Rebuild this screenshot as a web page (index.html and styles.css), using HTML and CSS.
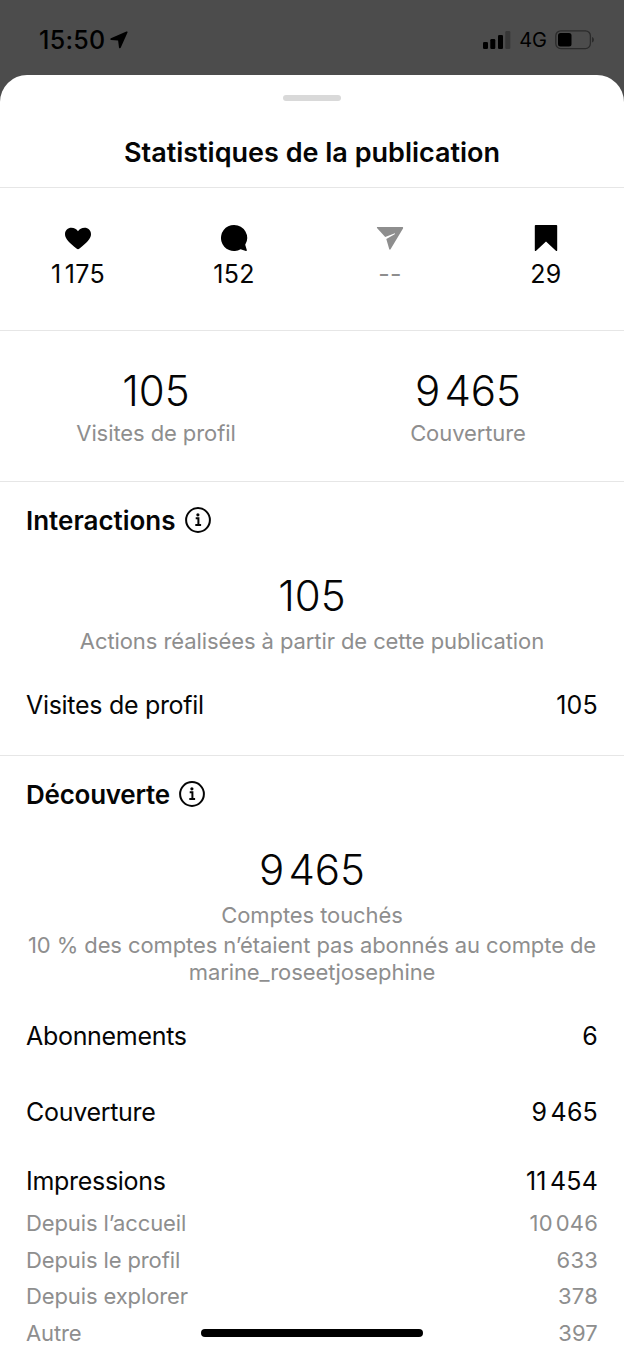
FILE: index.html
```html
<!DOCTYPE html>
<html lang="fr">
<head>
  <meta charset="UTF-8" />
  <meta name="viewport" content="width=device-width, initial-scale=1.0"/>
  <title>Statistiques de la publication</title>
  <link rel="stylesheet" href="styles.css">
</head>
<body>
  <div class="status">
    <div class="status-left">
      <span class="time">15:50</span>
      <svg width="18" height="18" viewBox="0 0 18 18"><path d="M16.400.6.900 7.300c-.9.500-.8 1.600.3 1.700l6.900.5.900 6.900c.2 1.100 1.400 1.200 1.800.2L17.500 1.600c.3-.8-.3-1.300-1.100-1z"/></svg>
    </div>
    <div class="status-right">
      <svg class="signal" width="28" height="18" viewBox="0 0 28 18">
        <rect x="0" y="11" width="5" height="7" rx="1.300"/>
        <rect x="7.300" y="8" width="5" height="10" rx="1.300"/>
        <rect x="15" y="4" width="5" height="14" rx="1.300"/>
        <rect x="22.300" y="0" width="5" height="18" rx="1.300" fill="#373737"/>
      </svg>
      <span class="network">4G</span>
      <svg class="battery" width="40" height="20" viewBox="0 0 40 20">
        <rect x=".8" y=".8" width="34.600" height="17.800" rx="5" fill="none" stroke="#2b2b2b" stroke-width="1.300"/>
        <rect x="3" y="3" width="13.500" height="13.400" rx="2.500"/>
        <path d="M37 7v5.500c2.600-.8 2.600-4.700 0-5.500z" fill="#2b2b2b"/>
      </svg>
    </div>
  </div>

  <main class="sheet">
    <div class="grabber"></div>
    <h1>Statistiques de la publication</h1>

    <section class="counts">
      <div class="count">
        <svg width="28" height="28" viewBox="0 0 28 28"><path d="M14 25.200c-.5 0-1-.3-1.500-.7C5.500 18.700 1 14.800 1 10.200 1 6.300 3.900 3.800 7.400 3.800c2.900 0 5.200 1.300 6.600 3.500 1.400-2.200 3.700-3.500 6.600-3.500 3.500 0 6.400 2.500 6.400 6.400 0 4.600-4.500 8.500-11.500 14.300-.5.400-1 .7-1.500.7z"/></svg>
        <span>1<i class="thin"></i>175</span>
      </div>
      <div class="count">
        <svg width="28" height="28" viewBox="0 0 28 28"><path d="M14 1a13 13 0 1 0 6.600 24.200l5.300 1.700c.7.2 1.100-.2.900-.9l-1.600-5.200A13 13 0 0 0 14 1z"/></svg>
        <span>152</span>
      </div>
      <div class="count off">
        <svg width="28" height="28" viewBox="0 0 28 28"><path d="M1.700 3.100h24.500c.8 0 1.200.7.8 1.400L14.700 25.100c-.5.900-1.300.7-1.500-.2l-2.900-9.800 8.400-4.900c.5-.3.200-1.100-.4-.8l-9.100 3.700-8-8.900c-.6-.7-.3-1.100.5-1.100z"/></svg>
        <span>--</span>
      </div>
      <div class="count">
        <svg width="28" height="28" viewBox="0 0 28 28"><path d="M3.600 1h20.800c.5 0 .8.3.8.8v24.400c0 .9-.7 1.200-1.300.6L14 17.400l-9.900 9.400c-.6.600-1.300.3-1.300-.6V1.800c0-.5.3-.8.800-.8z"/></svg>
        <span>29</span>
      </div>
    </section>

    <section class="totals">
      <div>
        <div class="big">105</div>
        <div class="label">Visites de profil</div>
      </div>
      <div>
        <div class="big">9<i class="thin"></i>465</div>
        <div class="label">Couverture</div>
      </div>
    </section>

    <section class="interactions">
      <h2>Interactions
        <svg class="info" width="26" height="26" viewBox="0 0 26 26"><circle cx="13" cy="13" r="11.900"/><path d="M10.700 11.300h2.700v6.500M10.300 18h5.800"/><circle class="dot" cx="12.900" cy="7.800" r="1.600"/></svg>
      </h2>
      <div class="big">105</div>
      <div class="label">Actions réalisées à partir de cette publication</div>
      <div class="row"><span>Visites de profil</span><span class="num">105</span></div>
    </section>

    <section class="discovery">
      <h2>Découverte
        <svg class="info" width="26" height="26" viewBox="0 0 26 26"><circle cx="13" cy="13" r="11.900"/><path d="M10.700 11.300h2.700v6.500M10.300 18h5.800"/><circle class="dot" cx="12.900" cy="7.800" r="1.600"/></svg>
      </h2>
      <div class="big">9<i class="thin"></i>465</div>
      <div class="label">Comptes touchés</div>
      <p class="note">10 % des comptes n’étaient pas abonnés au compte de<br/>marine_roseetjosephine</p>
      <div class="row"><span>Abonnements</span><span class="num">6</span></div>
      <div class="row"><span>Couverture</span><span class="num">9<i class="thin"></i>465</span></div>
      <div class="row last"><span>Impressions</span><span class="num">11<i class="thin"></i>454</span></div>
      <div class="sub"><span>Depuis l’accueil</span><span class="num">10<i class="thin"></i>046</span></div>
      <div class="sub"><span>Depuis le profil</span><span class="num">633</span></div>
      <div class="sub"><span>Depuis explorer</span><span class="num">378</span></div>
      <div class="sub"><span>Autre</span><span class="num">397</span></div>
    </section>
  </main>
  <div class="home-bar"></div>
</body>
</html>
```
FILE: styles.css
```css
* { box-sizing: border-box; }
body {
  margin: 0;
  height: 1350px;
  overflow: hidden;
  background: #4c4c4c;
  color: #050505;
  font-family: Inter, "Liberation Sans", sans-serif;
  font-size: 25px;
}
svg { display: block; flex: none; }
h1, h2, p { margin: 0; }

.status {
  height: 75px;
  padding: 5px 29px 0 39px;
  display: flex;
  align-items: center;
  justify-content: space-between;
  color: #000;
}
.status-left, .status-right { display: flex; align-items: center; }
.time {
  font-weight: 500;
  font-size: 25px;
  letter-spacing: 0.3px;
  margin-right: 4px;
}
.network { font-size: 20px; margin: 0 8px 0 8px; }

.sheet {
  height: 1275px;
  background: #fff;
  border-radius: 27px 27px 0 0;
}
.grabber {
  width: 58px;
  height: 6px;
  margin: 0 auto;
  position: relative;
  top: 20px;
  border-radius: 3px;
  background: #d9d9d9;
}
h1 {
  height: 106px;
  padding-top: 52px;
  line-height: 40px;
  font-size: 27px;
  font-weight: 600;
  text-align: center;
}
section { border-top: 1px solid #e6e6e6; }

.counts {
  height: 143px;
  padding-top: 36px;
  display: grid;
  grid-template-columns: repeat(4, 1fr);
}
.count {
  display: flex;
  flex-direction: column;
  align-items: center;
  line-height: 30px;
  gap: 7px;
  letter-spacing: 0.3px;
}
.off { color: #8e8e8e; }
.off svg { fill: #8e8e8e; }
.thin { display: inline-block; width: 0.13em; }

.totals {
  height: 151px;
  padding-top: 35px;
  display: grid;
  grid-template-columns: 1fr 1fr;
}
.big {
  height: 50px;
  line-height: 50px;
  font-size: 42px;
  font-weight: 300;
  text-align: center;
}
.big .thin { width: 0.1em; }
.label, .note {
  color: #8e8e8e;
  font-size: 22px;
  line-height: 30px;
  letter-spacing: -0.09px;
  text-align: center;
}
.totals .label { padding-top: 2px; }

.interactions, .discovery { padding: 23px 26px 0; }
.interactions { height: 274px; }
h2 {
  display: flex;
  align-items: center;
  gap: 9px;
  height: 30px;
  margin-bottom: 36px;
  font-size: 26px;
  font-weight: 600;
}
.discovery h2 { letter-spacing: -0.25px; }
.info { fill: none; stroke: #050505; stroke-width: 2; }
.info .dot { fill: #050505; stroke: none; }
.interactions .label, .discovery .label { padding-top: 5px; }
.note { line-height: 27px; padding-top: 2px; white-space: nowrap; }

.row, .sub {
  display: flex;
  justify-content: space-between;
  line-height: 30px;
  letter-spacing: -0.3px;
}
.row .num, .sub .num { letter-spacing: 0.2px; }
.interactions .row { margin-top: 34px; }
.discovery .row { margin-bottom: 46px; }
.note + .row { margin-top: 35px; }
.discovery .last { margin: -7px 0 9px; }
.sub {
  color: #8e8e8e;
  font-size: 22px;
  line-height: 36.700px;
  letter-spacing: -0.12px;
}

.home-bar {
  position: absolute;
  left: 201px;
  top: 1329px;
  width: 222px;
  height: 8px;
  border-radius: 4px;
  background: #000;
}
```
